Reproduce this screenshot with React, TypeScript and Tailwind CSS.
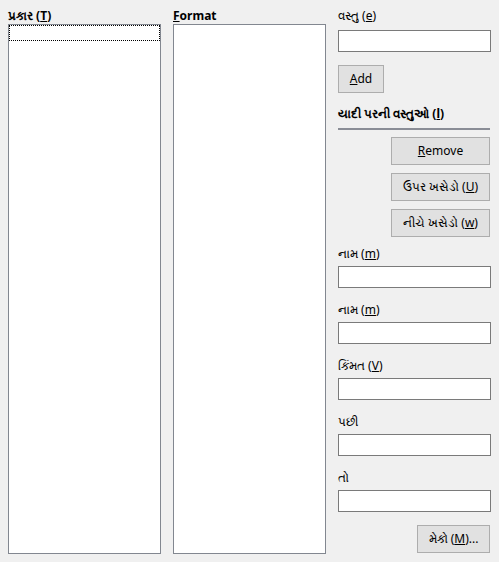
import React from "react";

const font = { fontFamily: '"Noto Sans", "Open Sans", sans-serif' };

function TextBox() {
  return <div className="h-[22px] w-[153px] border border-[#7a7a7a] bg-white" />;
}

function Btn({ children, w }: { children: React.ReactNode; w: string }) {
  return (
    <div
      className={`flex h-[28px] items-center justify-center border border-[#adadad] bg-[#e1e1e1] text-[12px] text-black ${w}`}
    >
      {children}
    </div>
  );
}

function Field({ label, first }: { label: React.ReactNode; first?: boolean }) {
  return (
    <div className={`flex flex-col ${first ? "mt-[9px]" : "mt-[14px]"}`}>
      <div className="h-[16px] text-[12px] leading-[16px]">{label}</div>
      <div className="mt-[4px]">
        <TextBox />
      </div>
    </div>
  );
}

export default function App() {
  return (
    <div
      style={font}
      className="flex h-[562px] w-[499px] gap-[12px] bg-[#f0f0f0] pl-[8px] pt-[8px] text-black"
    >
      {/* Type list */}
      <div className="flex w-[153px] flex-col">
        <div className="h-[16px] text-[12px] font-bold leading-[16px]">
          પ્રકાર (<u>T</u>)
        </div>
        <div className="h-[530px] border border-[#828790] bg-white">
          <div className="h-[16px] border border-dotted border-black" />
        </div>
      </div>

      {/* Format list */}
      <div className="flex w-[153px] flex-col">
        <div className="h-[16px] text-[12px] font-bold leading-[16px]">
          <u>F</u>ormat
        </div>
        <div className="h-[530px] border border-[#828790] bg-white" />
      </div>

      {/* Right column */}
      <div className="flex w-[153px] flex-col">
        <div className="h-[16px] text-[12px] leading-[16px]">
          વસ્તુ (<u>e</u>)
        </div>
        <div className="mt-[6px]">
          <TextBox />
        </div>
        <div className="mt-[13px]">
          <Btn w="w-[46px]">
            <span>
              <u>A</u>dd
            </span>
          </Btn>
        </div>
        <div className="mt-[13px] h-[16px] text-[12px] font-bold leading-[16px]">
          યાદી પરની વસ્તુઓ (<u>l</u>)
        </div>
        <div className="mt-[6px] h-[2px] w-[152px] bg-[#8a8d96]" />
        <div className="mt-[7px] flex flex-col items-end gap-[8px] pr-[1px]">
          <Btn w="w-[99px]">
            <span>
              <u>R</u>emove
            </span>
          </Btn>
          <Btn w="w-[99px]">
            <span>
              ઉપર ખસેડો (<u>U</u>)
            </span>
          </Btn>
          <Btn w="w-[99px]">
            <span>
              નીચે ખસેડો (<u>w</u>)
            </span>
          </Btn>
        </div>
        <Field first label={<span>નામ (<u>m</u>)</span>} />
        <Field label={<span>નામ (<u>m</u>)</span>} />
        <Field label={<span>કિંમત (<u>V</u>)</span>} />
        <Field label={<span>પછી</span>} />
        <Field label={<span>તો</span>} />
        <div className="mt-[13px] flex justify-end pr-[1px]">
          <Btn w="w-[73px]">
            <span>
              મેકો (<u>M</u>)...
            </span>
          </Btn>
        </div>
      </div>
    </div>
  );
}
